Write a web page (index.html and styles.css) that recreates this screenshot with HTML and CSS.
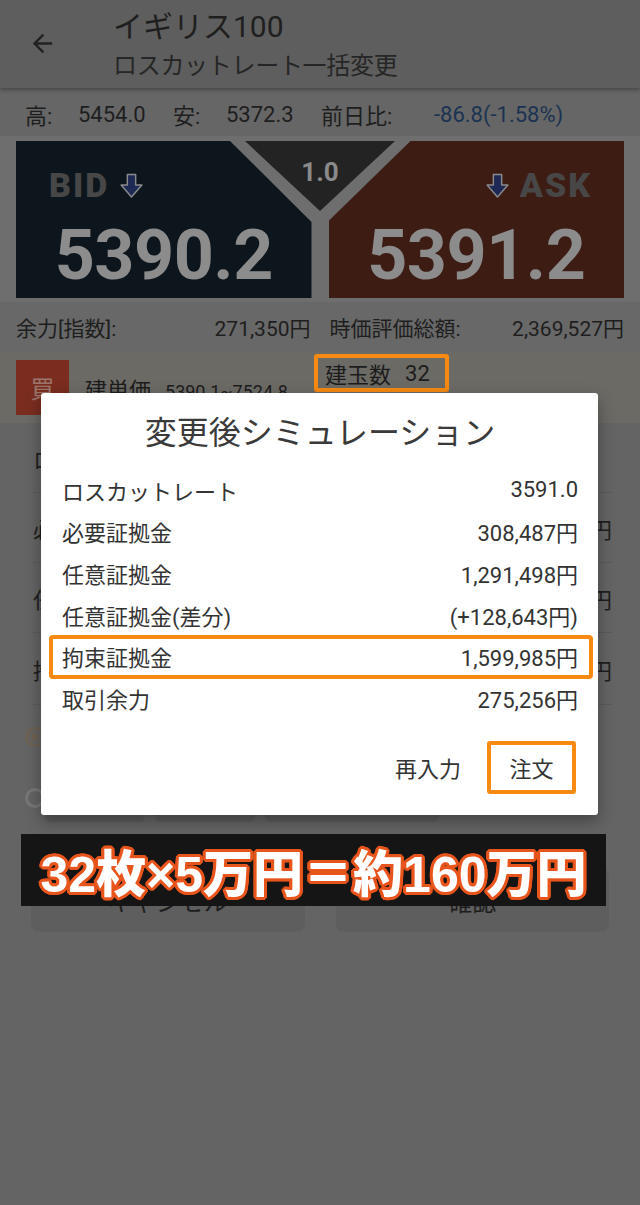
FILE: index.html
```html
<!DOCTYPE html>
<html lang="ja">
<head>
<meta charset="utf-8">
<title>ロスカットレート一括変更</title>
<link rel="stylesheet" href="styles.css">
</head>
<body>
<header class="appbar">
  <div class="back">
    <svg viewBox="0 0 24 24"><path d="M20 11H7.83l5.59-5.59L12 4l-8 8 8 8 1.41-1.41L7.83 13H20v-2z"/></svg>
  </div>
  <div class="titles">
    <div class="title">イギリス100</div>
    <div class="subtitle">ロスカットレート一括変更</div>
  </div>
</header>

<div class="stats">
  <span>高:</span><span>5454.0</span>
  <span>安:</span><span>5372.3</span>
  <span>前日比:</span><span class="chg">-86.8(-1.58%)</span>
</div>

<div class="prices">
  <div class="panel bid">
    <div class="plabel">
      <span>BID</span>
      <svg class="arrow" viewBox="0 0 26 26"><path d="M9 2.5H17V12.5H23L13 24L3 12.5H9Z"/></svg>
    </div>
    <div class="price">5390.2</div>
  </div>
  <div class="panel ask">
    <div class="plabel">
      <svg class="arrow" viewBox="0 0 26 26"><path d="M9 2.5H17V12.5H23L13 24L3 12.5H9Z"/></svg>
      <span>ASK</span>
    </div>
    <div class="price">5391.2</div>
  </div>
  <div class="spread">1.0</div>
</div>

<div class="balance">
  <div class="cell"><span>余力[指数]:</span><span>271,350円</span></div>
  <div class="cell"><span>時価評価総額:</span><span>2,369,527円</span></div>
</div>

<div class="position">
  <div class="side">買</div>
  <div class="unit">建単価<small>5390.1~7524.8</small></div>
  <div class="qty"><span>建玉数</span><span>32</span></div>
</div>

<div class="list">
  <div class="row"><span>ロスカットレート</span><span></span></div>
  <div class="row"><span>必要証拠金</span><span>円</span></div>
  <div class="row"><span>任意証拠金</span><span>円</span></div>
  <div class="row tall"><span>拘束証拠金</span><span>円</span></div>
</div>

<div class="radio-row first"><span class="radio on"></span></div>
<div class="radio-row second">
  <span class="radio"></span>
  <span class="field w1"></span>
  <span class="field w1"></span>
  <span class="field w2"></span>
  <span class="yen">円</span>
</div>

<div class="buttons">
  <div class="btn">キャンセル</div>
  <div class="btn">確認</div>
</div>

<div class="dialog">
  <div class="dlg-title">変更後シミュレーション</div>
  <div class="dlg-row"><span>ロスカットレート</span><span>3591.0</span></div>
  <div class="dlg-row"><span>必要証拠金</span><span>308,487円</span></div>
  <div class="dlg-row"><span>任意証拠金</span><span>1,291,498円</span></div>
  <div class="dlg-row"><span>任意証拠金(差分)</span><span>(+128,643円)</span></div>
  <div class="dlg-row marked"><span>拘束証拠金</span><span>1,599,985円</span></div>
  <div class="dlg-row"><span>取引余力</span><span>275,256円</span></div>
  <div class="dlg-actions">
    <span class="act">再入力</span>
    <span class="act order">注文</span>
  </div>
</div>

<div class="caption">32枚×5万円＝約160万円</div>
</body>
</html>
```

FILE: styles.css
```css
* { box-sizing: border-box; margin: 0; padding: 0; }
html, body { width: 640px; height: 1205px; overflow: hidden; }
body {
  position: relative;
  background: #646464;
  font-family: Roboto, "Noto Sans CJK JP", sans-serif;
  color: #1e1e1e;
}

/* app bar */
.appbar {
  position: relative;
  z-index: 1;
  height: 88px;
  display: flex;
  background: #5e5e5e;
  box-shadow: 0 2px 4px rgba(0,0,0,.3);
}
.back { width: 113px; padding: 29px 0 0 28px; }
.back svg { display: block; width: 29px; height: 29px; fill: #222; }
.titles { padding-top: 9px; }
.title { font-size: 30px; line-height: 36px; color: #1f1f1f; }
.subtitle { font-size: 24px; line-height: 34px; margin-top: 4px; color: #262626; letter-spacing: -0.3px; }

/* stats */
.stats {
  height: 48px;
  padding: 4px 0 0 25px;
  display: grid;
  grid-template-columns: 53px 95px 53px 95px 113px auto;
  align-items: center;
  font-size: 22px;
  background: #666;
}
.chg { color: #1b3352; }

/* price panels */
.prices {
  position: relative;
  display: flex;
  gap: 17px;
  padding: 5px 16px 4px;
  background: #6e6e6e;
}
.panel { flex: 1; height: 157px; padding-top: 28px; }
.bid {
  background: #0e161d;
  clip-path: polygon(0 0, 214px 0, 100% 81px, 100% 100%, 0 100%);
}
.ask {
  background: #3d1c14;
  clip-path: polygon(82px 0, 100% 0, 100% 100%, 0 100%, 0 80px);
}
.plabel {
  display: flex;
  align-items: center;
  gap: 9px;
  height: 32px;
  font-size: 34px;
  font-weight: 900;
  letter-spacing: 2px;
  color: #474747;
}
.bid .plabel { padding-left: 33px; }
.ask .plabel { justify-content: flex-end; padding-right: 32px; }
.arrow { width: 27px; height: 27px; fill: #1e2a55; stroke: #8a8a8a; stroke-width: 1.4; stroke-linejoin: round; }
.price {
  margin-top: 16px;
  text-align: center;
  font-size: 70px;
  line-height: 76px;
  font-weight: 700;
  letter-spacing: -0.5px;
  color: #8c8c8c;
}
.spread {
  position: absolute;
  top: 5px;
  left: 245px;
  width: 150px;
  height: 70px;
  padding-top: 16px;
  text-align: center;
  font-size: 26px;
  line-height: 30px;
  font-weight: 700;
  color: #8a8a8a;
  background: #232323;
  clip-path: polygon(0 0, 100% 0, 50% 100%);
}

/* balance */
.balance {
  height: 50px;
  display: grid;
  grid-template-columns: 1fr 1fr;
  column-gap: 19px;
  align-items: center;
  padding: 0 16px;
  font-size: 21px;
  background: #686868;
}
.cell { display: flex; justify-content: space-between; }

/* position card */
.position {
  height: 71px;
  display: flex;
  align-items: flex-start;
  padding: 2px 16px 0;
  background: #6c6a65;
}
.side {
  width: 53px;
  height: 55px;
  margin-top: 6px;
  display: flex;
  align-items: center;
  justify-content: center;
  font-size: 24px;
  color: #9a766c;
  background: #7a2d1f;
}
.unit {
  width: 211px;
  margin: 22px 0 0 16px;
  font-size: 22px;
  line-height: 30px;
  color: #1c1c1c;
}
.unit small { font-size: 18px; margin-left: 14px; }
.qty {
  height: 38px;
  margin-left: 18px;
  display: flex;
  align-items: center;
  gap: 14px;
  padding: 0 15px 0 7px;
  font-size: 22px;
  color: #1c1c1c;
  border: 4px solid #f88a12;
  border-radius: 3px;
}

/* list behind the dialog */
.row {
  height: 70px;
  margin: 0 28px 0 33px;
  display: flex;
  justify-content: space-between;
  align-items: center;
  font-size: 22px;
  border-bottom: 1px solid #5b5b5b;
}
.row.tall { height: 72px; }
.radio-row { display: flex; align-items: center; padding-left: 25px; }
.radio-row.first { height: 63px; }
.radio-row.second { height: 60px; }
.radio {
  position: relative;
  width: 20px;
  height: 20px;
  border-radius: 50%;
  border: 3px solid #777;
}
.radio.on { border-color: #6d6253; }
.radio.on::after {
  content: "";
  position: absolute;
  inset: 3px;
  border-radius: 50%;
  background: #6d6253;
}
.field { height: 48px; border-radius: 6px; background: #5c5c5c; }
.field.w1 { width: 100px; }
.field.w2 { width: 174px; }
.second .field:first-of-type { margin-left: 165px; }
.second .field + .field { margin-left: 10px; }
.yen { margin-left: 1px; font-size: 22px; }

/* bottom buttons */
.buttons { display: flex; gap: 31px; padding: 0 31px; margin-top: 40px; }
.btn {
  flex: 1;
  height: 64px;
  display: flex;
  align-items: center;
  justify-content: center;
  font-size: 24px;
  color: #1c1c1c;
  background: #5e5e5e;
  border-radius: 8px;
}

/* dialog */
.dialog {
  position: absolute;
  top: 393px;
  left: 41px;
  width: 557px;
  height: 422px;
  padding: 0 20px 0 21px;
  background: #fff;
  border-radius: 3px;
  box-shadow: 0 6px 16px rgba(0,0,0,.35);
  color: #333;
}
.dlg-title {
  height: 76px;
  line-height: 80px;
  text-align: center;
  font-size: 32px;
  color: #3a3a3a;
}
.dlg-row {
  position: relative;
  height: 41.6px;
  display: flex;
  justify-content: space-between;
  align-items: center;
  font-size: 22px;
}
.dlg-row.marked::after {
  content: "";
  position: absolute;
  top: 0;
  bottom: -2px;
  left: -13px;
  right: -15px;
  border: 4px solid #f88a12;
  border-radius: 4px;
}
.dlg-actions {
  height: 53px;
  margin: 22px 2px 0 0;
  display: flex;
  justify-content: flex-end;
  align-items: center;
  gap: 26px;
  font-size: 22px;
}
.act.order {
  width: 89px;
  height: 53px;
  display: flex;
  align-items: center;
  justify-content: center;
  border: 4px solid #f88a12;
  border-radius: 3px;
}

/* caption banner */
.caption {
  position: absolute;
  top: 834px;
  left: 21px;
  width: 585px;
  height: 72px;
  display: flex;
  align-items: center;
  justify-content: center;
  background: #151515;
  font-family: "Liberation Sans", "Noto Sans CJK JP", sans-serif;
  font-weight: 900;
  font-size: 50px;
  color: #fff;
  text-shadow:
    3px 0 #e8551c, -3px 0 #e8551c, 0 3px #e8551c, 0 -3px #e8551c,
    2px 2px #e8551c, -2px 2px #e8551c, 2px -2px #e8551c, -2px -2px #e8551c,
    3px 1px #e8551c, 3px -1px #e8551c, -3px 1px #e8551c, -3px -1px #e8551c,
    1px 3px #e8551c, -1px 3px #e8551c, 1px -3px #e8551c, -1px -3px #e8551c;
}
```
